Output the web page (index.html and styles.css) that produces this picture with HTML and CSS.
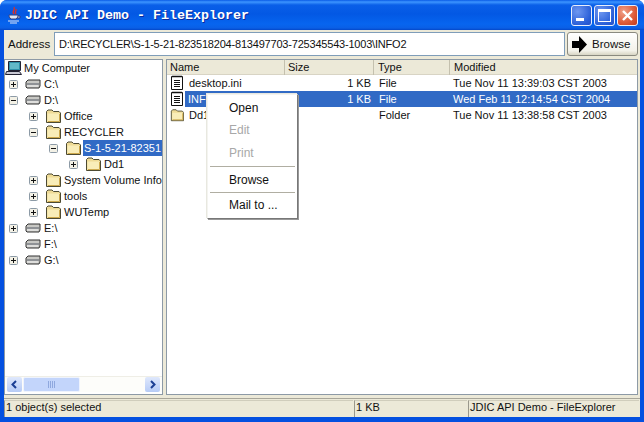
FILE: index.html
```html
<!DOCTYPE html>
<html lang="en">
<head>
	<meta charset="UTF-8">
	<title>JDIC API Demo - FileExplorer</title>
	<link rel="stylesheet" href="styles.css">
</head>
<body>
<svg class="defs" width="0" height="0">
	<symbol id="drive" viewBox="0 0 16 16">
		<path d="M1 6 L3 4 H15 V10 L14 12 H2 L1 11 Z" fill="#c8c8c4" stroke="#333"/>
		<path d="M2 7 H14 V9 H2 Z" fill="#8f9296"/>
		<path d="M2 10 H13" stroke="#f4f4f4"/>
	</symbol>
	<symbol id="folder" viewBox="0 0 16 16">
		<path d="M1.500 14.500 V3.500 L3 2 H7 L8.500 3.500 H14 L15.500 5 V14.500 Z" fill="#efdb96" stroke="#4d4a32"/>
		<path d="M2.500 5.500 H14.500 V13.500 H2.500 Z" fill="#f9edb8"/>
		<path d="M14.500 6 V13.500 H3" fill="none" stroke="#cda94c"/>
	</symbol>
	<symbol id="doc" viewBox="0 0 14 16">
		<path d="M1.500 1.500 H12.500 V14.500 H1.500 Z" fill="#fff" stroke="#111"/>
		<path d="M3 0.500 V2.500 M5 0.500 V2.500 M7 0.500 V2.500 M9 0.500 V2.500 M11 0.500 V2.500" stroke="#111"/>
		<path d="M4 5.500 H10 M4 7.500 H10 M4 9.500 H10 M4 11.500 H10" stroke="#111"/>
	</symbol>
	<symbol id="plus" viewBox="0 0 9 9">
		<rect x="0.500" y="0.500" width="8" height="8" rx="1" fill="#f3f1e6" stroke="#8c9aa6"/>
		<path d="M2 4.500 H7 M4.500 2 V7" stroke="#111"/>
	</symbol>
	<symbol id="minus" viewBox="0 0 9 9">
		<rect x="0.500" y="0.500" width="8" height="8" rx="1" fill="#f3f1e6" stroke="#8c9aa6"/>
		<path d="M2 4.500 H7" stroke="#111"/>
	</symbol>
</svg>

<div class="window">
	<div class="titlebar">
		<svg class="java-icon" width="16" height="18" viewBox="0 0 16 18">
			<path d="M8 1 C10 4 5 5 8 8 M10 3 C11 5 8 6 10 8" fill="none" stroke="#e03020" stroke-width="1.300"/>
			<path d="M3 9 H12 C12 9 12 12 10 13 H5 C3 12 3 9 3 9 Z M12 10 H14 V12 H11.500" fill="#dfe6f5" stroke="#39407a"/>
			<path d="M2 15 H13 M4 17 H11" stroke="#dfe6f5"/>
		</svg>
		<span class="title-text">JDIC API Demo - FileExplorer</span>
		<div class="win-buttons">
			<a class="win-btn"><i class="min-glyph"></i></a>
			<a class="win-btn"><i class="max-glyph"></i></a>
			<a class="win-btn close">
				<svg width="13" height="13" viewBox="0 0 13 13"><path d="M2 2 L11 11 M11 2 L2 11" stroke="#fff" stroke-width="2.400"/></svg>
			</a>
		</div>
	</div>

	<div class="client">
		<div class="address-bar">
			<span class="address-label">Address</span>
			<div class="address-input">D:\RECYCLER\S-1-5-21-823518204-813497703-725345543-1003\INFO2</div>
			<div class="browse-btn">
				<svg width="15" height="17" viewBox="0 0 15 17"><path d="M0 5 H7 V0 L15 8.500 L7 17 V12 H0 Z" fill="#000"/></svg>
				<span>Browse</span>
			</div>
		</div>

		<div class="panes">
			<div class="tree-pane">
				<div class="tree">
					<div class="tree-row">
						<svg class="pc-icon" width="18" height="16" viewBox="0 0 18 16">
							<path d="M3.500 1.500 H15.500 V10.500 H3.500 Z" fill="#2f8fa8" stroke="#223"/>
							<path d="M5 3 H14 V9 H5 Z" fill="#62b8c8"/>
							<path d="M1.500 11.500 H14.500 L16.500 14.500 H0.500 Z" fill="#c9c9d4" stroke="#223"/>
						</svg>
						<span class="label">My Computer</span>
					</div>
					<div class="tree-row lv0"><svg class="tog"><use href="#plus"/></svg><svg class="ico"><use href="#drive"/></svg><span class="label">C:\</span></div>
					<div class="tree-row lv0"><svg class="tog"><use href="#minus"/></svg><svg class="ico"><use href="#drive"/></svg><span class="label">D:\</span></div>
					<div class="tree-row lv1"><svg class="tog"><use href="#plus"/></svg><svg class="ico"><use href="#folder"/></svg><span class="label">Office</span></div>
					<div class="tree-row lv1"><svg class="tog"><use href="#minus"/></svg><svg class="ico"><use href="#folder"/></svg><span class="label">RECYCLER</span></div>
					<div class="tree-row lv2"><svg class="tog"><use href="#minus"/></svg><svg class="ico"><use href="#folder"/></svg><span class="label selected">S-1-5-21-82351</span></div>
					<div class="tree-row lv3"><svg class="tog"><use href="#plus"/></svg><svg class="ico"><use href="#folder"/></svg><span class="label">Dd1</span></div>
					<div class="tree-row lv1"><svg class="tog"><use href="#plus"/></svg><svg class="ico"><use href="#folder"/></svg><span class="label">System Volume Info</span></div>
					<div class="tree-row lv1"><svg class="tog"><use href="#plus"/></svg><svg class="ico"><use href="#folder"/></svg><span class="label">tools</span></div>
					<div class="tree-row lv1"><svg class="tog"><use href="#plus"/></svg><svg class="ico"><use href="#folder"/></svg><span class="label">WUTemp</span></div>
					<div class="tree-row lv0"><svg class="tog"><use href="#plus"/></svg><svg class="ico"><use href="#drive"/></svg><span class="label">E:\</span></div>
					<div class="tree-row lv0"><span class="tog"></span><svg class="ico"><use href="#drive"/></svg><span class="label">F:\</span></div>
					<div class="tree-row lv0"><svg class="tog"><use href="#plus"/></svg><svg class="ico"><use href="#drive"/></svg><span class="label">G:\</span></div>
				</div>
				<div class="hscroll">
					<div class="sb-btn"><svg width="9" height="9" viewBox="0 0 9 9"><path d="M6 1 L2.500 4.500 L6 8" fill="none" stroke="#1c3f94" stroke-width="2"/></svg></div>
					<div class="sb-thumb"><i></i><i></i><i></i><i></i></div>
					<div class="sb-track"></div>
					<div class="sb-btn"><svg width="9" height="9" viewBox="0 0 9 9"><path d="M3 1 L6.500 4.500 L3 8" fill="none" stroke="#1c3f94" stroke-width="2"/></svg></div>
				</div>
			</div>

			<div class="list-pane">
				<div class="list-head">
					<div class="col-name">Name</div>
					<div class="col-size">Size</div>
					<div class="col-type">Type</div>
					<div class="col-mod">Modified</div>
				</div>
				<div class="list-row">
					<div class="col-name"><svg class="file-ico"><use href="#doc"/></svg><span>desktop.ini</span></div>
					<div class="col-size num">1 KB</div>
					<div class="col-type">File</div>
					<div class="col-mod">Tue Nov 11 13:39:03 CST 2003</div>
				</div>
				<div class="list-row selected">
					<div class="col-name"><svg class="file-ico"><use href="#doc"/></svg><span>INF</span></div>
					<div class="col-size num">1 KB</div>
					<div class="col-type">File</div>
					<div class="col-mod">Wed Feb 11 12:14:54 CST 2004</div>
				</div>
				<div class="list-row">
					<div class="col-name"><svg class="file-ico"><use href="#folder"/></svg><span>Dd1</span></div>
					<div class="col-size num"></div>
					<div class="col-type">Folder</div>
					<div class="col-mod">Tue Nov 11 13:38:58 CST 2003</div>
				</div>
			</div>
		</div>

		<div class="statusbar">
			<div class="cell cell-msg">1 object(s) selected</div>
			<div class="cell cell-size">1 KB</div>
			<div class="cell cell-app">JDIC API Demo - FileExplorer</div>
		</div>
	</div>

	<div class="popup">
		<div class="menu-item">Open</div>
		<div class="menu-item off">Edit</div>
		<div class="menu-item off">Print</div>
		<div class="menu-sep sep-first"></div>
		<div class="menu-item">Browse</div>
		<div class="menu-sep"></div>
		<div class="menu-item">Mail to ...</div>
	</div>
</div>
</body>
</html>
```

FILE: styles.css
```css
html, body {
	margin: 0;
	padding: 0;
	background: #fff;
}
.defs {
	position: absolute;
}
.window {
	position: relative;
	box-sizing: border-box;
	width: 644px;
	height: 422px;
	display: flex;
	flex-direction: column;
	padding: 0 4px 5px 4px;
	border-radius: 7px 7px 0 0;
	background: #0450e0;
	font-family: "Liberation Sans", Arial, sans-serif;
	font-size: 11px;
	color: #111;
	overflow: hidden;
}

/* title bar */
.titlebar {
	display: flex;
	align-items: center;
	height: 30px;
	margin: 0 -4px;
	padding: 0 6px 0 6px;
	flex: none;
	box-sizing: border-box;
	background: linear-gradient(to bottom, #0a5be6 0, #3d95ff 2px, #0a5fe8 5px, #0358e4 14px, #0765ef 24px, #0a5fe6 28px, #0347c8 30px);
}
.java-icon {
	flex: none;
	margin-right: 3px;
}
.title-text {
	font-family: "Liberation Mono", monospace;
	font-size: 13.33px;
	font-weight: bold;
	color: #fff;
	text-shadow: 1px 1px 0 #0a2a9c;
	white-space: pre;
}
.win-buttons {
	display: flex;
	gap: 2px;
	margin-left: auto;
}
.win-btn {
	display: flex;
	align-items: center;
	justify-content: center;
	box-sizing: border-box;
	position: relative;
	width: 21px;
	height: 21px;
	border: 1px solid #e8eefc;
	border-radius: 3px;
	background: radial-gradient(circle at 30% 30%, #6e97f0, #2a5fd8 70%, #2550c8);
}
.win-btn.close {
	background: radial-gradient(circle at 30% 30%, #f0a088, #dc5a38 60%, #c03a1c);
}
.min-glyph {
	width: 8px;
	height: 3px;
	background: #fff;
	margin-top: 9px;
	margin-right: 4px;
}
.max-glyph {
	box-sizing: border-box;
	width: 13px;
	height: 13px;
	border: 1px solid #fff;
	border-top-width: 3px;
}

/* client area */
.client {
	flex: 1;
	min-height: 0;
	display: flex;
	flex-direction: column;
	background: #ece9d8;
}
.address-bar {
	display: flex;
	align-items: center;
	flex: none;
	height: 29px;
	padding: 0 2px 1px 4px;
	box-sizing: border-box;
}
.address-label {
	width: 46px;
	flex: none;
	font-size: 11.500px;
}
.address-input {
	box-sizing: border-box;
	width: 511px;
	height: 24px;
	line-height: 22px;
	padding-left: 4px;
	border: 1px solid #7f9db9;
	background: #fff;
	white-space: nowrap;
	letter-spacing: -0.2px;
}
.browse-btn {
	display: flex;
	align-items: center;
	gap: 5px;
	box-sizing: border-box;
	width: 71px;
	height: 24px;
	margin-left: 2px;
	padding-left: 4px;
	border: 1px solid #8a8a80;
	border-radius: 3px;
	background: linear-gradient(to bottom, #fff, #f3f2ea 80%, #d8d5c4);
	font-size: 11.500px;
}

.panes {
	flex: 1;
	min-height: 0;
	display: flex;
	gap: 3px;
	padding: 0 2px 3px 0;
}

/* tree */
.tree-pane {
	box-sizing: border-box;
	width: 159px;
	display: flex;
	flex-direction: column;
	border: 1px solid #8d9aa6;
	background: #fff;
}
.tree {
	flex: 1;
	min-height: 0;
	overflow: hidden;
}
.tree-row {
	display: flex;
	align-items: center;
	height: 16px;
	white-space: nowrap;
}
.lv0 { padding-left: 4px; }
.lv1 { padding-left: 24px; }
.lv2 { padding-left: 44px; }
.lv3 { padding-left: 64px; }
.tog {
	flex: none;
	width: 9px;
	height: 9px;
	margin-right: 7px;
}
.ico {
	flex: none;
	width: 16px;
	height: 16px;
	margin-right: 2px;
}
.pc-icon {
	flex: none;
	margin-right: 0;
}
.label {
	padding: 0 1px;
	line-height: 16px;
}
.label.selected {
	background: #316ac5;
	color: #fff;
}
.hscroll {
	display: flex;
	flex: none;
	height: 16px;
	margin-bottom: 2px;
	padding: 0 2px;
	gap: 1px;
	background: #fdfdfa;
	border-top: 1px solid #efeee6;
	box-sizing: border-box;
}
.sb-btn {
	display: flex;
	align-items: center;
	justify-content: center;
	width: 15px;
	height: 15px;
	border-radius: 2px;
	background: linear-gradient(to bottom, #dfe8fc, #b6cbf6);
}
.sb-thumb {
	display: flex;
	align-items: center;
	justify-content: center;
	gap: 1px;
	box-sizing: border-box;
	width: 57px;
	height: 15px;
	border: 1px solid #eef3fe;
	border-radius: 2px;
	background: #c3d5fb;
}
.sb-thumb i {
	width: 1px;
	height: 7px;
	background: #8fa8de;
}
.sb-track {
	flex: 1;
}

/* file list */
.list-pane {
	flex: 1;
	min-width: 0;
	border: 1px solid #8d9aa6;
	background: #fff;
}
.list-head,
.list-row {
	display: flex;
	height: 16px;
	line-height: 16px;
}
.list-head {
	height: 15px;
	line-height: 15px;
	background: #ece9d8;
	box-shadow: inset 0 -1px 0 #d8d4c4;
}
.col-name {
	display: flex;
	align-items: center;
	box-sizing: border-box;
	width: 118px;
	flex: none;
	padding-left: 3px;
}
.col-size {
	box-sizing: border-box;
	width: 89px;
	flex: none;
	padding-left: 3px;
}
.col-size.num {
	padding-right: 3px;
	text-align: right;
}
.col-type {
	box-sizing: border-box;
	width: 76px;
	flex: none;
	padding-left: 5px;
}
.col-mod {
	flex: 1;
	padding-left: 3px;
}
.list-head .col-type,
.list-head .col-mod {
	padding-left: 4px;
}
.list-head .col-name,
.list-head .col-size,
.list-head .col-type {
	border-right: 1px solid #c4c0ae;
}
.file-ico {
	flex: none;
	width: 14px;
	height: 16px;
	margin-right: 1px;
}
.col-name span {
	padding-left: 4px;
}
.list-row.selected .col-name span,
.list-row.selected .col-size,
.list-row.selected .col-type,
.list-row.selected .col-mod {
	background: #316ac5;
	color: #fff;
}
.list-row.selected .col-name span {
	flex: 1;
	padding-left: 3px;
}

/* status bar */
.statusbar {
	display: flex;
	flex: none;
	height: 19px;
	gap: 1px;
	border-top: 1px solid #a8a69a;
	box-sizing: border-box;
	padding-top: 1px;
}
.cell {
	box-sizing: border-box;
	height: 17px;
	line-height: 13px;
	padding-left: 1px;
	border-left: 1px solid #9a988c;
	border-top: 1px solid #d0cdbc;
	white-space: nowrap;
}
.cell-msg { width: 349px; }
.cell-size { width: 113px; }
.cell-app { width: 171px; }

/* popup menu */
.popup {
	position: absolute;
	left: 207px;
	top: 94px;
	box-sizing: border-box;
	width: 91px;
	height: 125px;
	padding: 2px 1px;
	background: #fff;
	border: 1px solid #f4f4f0;
	border-right-color: #777;
	border-bottom-color: #777;
	box-shadow: -1px -1px 0 #e8e8e0, 1px 1px 0 #999;
}
.menu-item {
	height: 22px;
	line-height: 22px;
	padding-left: 20px;
	font-size: 12px;
	color: #111;
}
.menu-item.off {
	color: #a8a8a8;
}
.menu-item.off + .menu-item.off {
	margin: 1px 0;
}
.menu-sep {
	height: 1px;
	margin: 1px;
	background: #b0aea2;
}
.menu-sep.sep-first {
	margin: 2px 1px;
}
```
